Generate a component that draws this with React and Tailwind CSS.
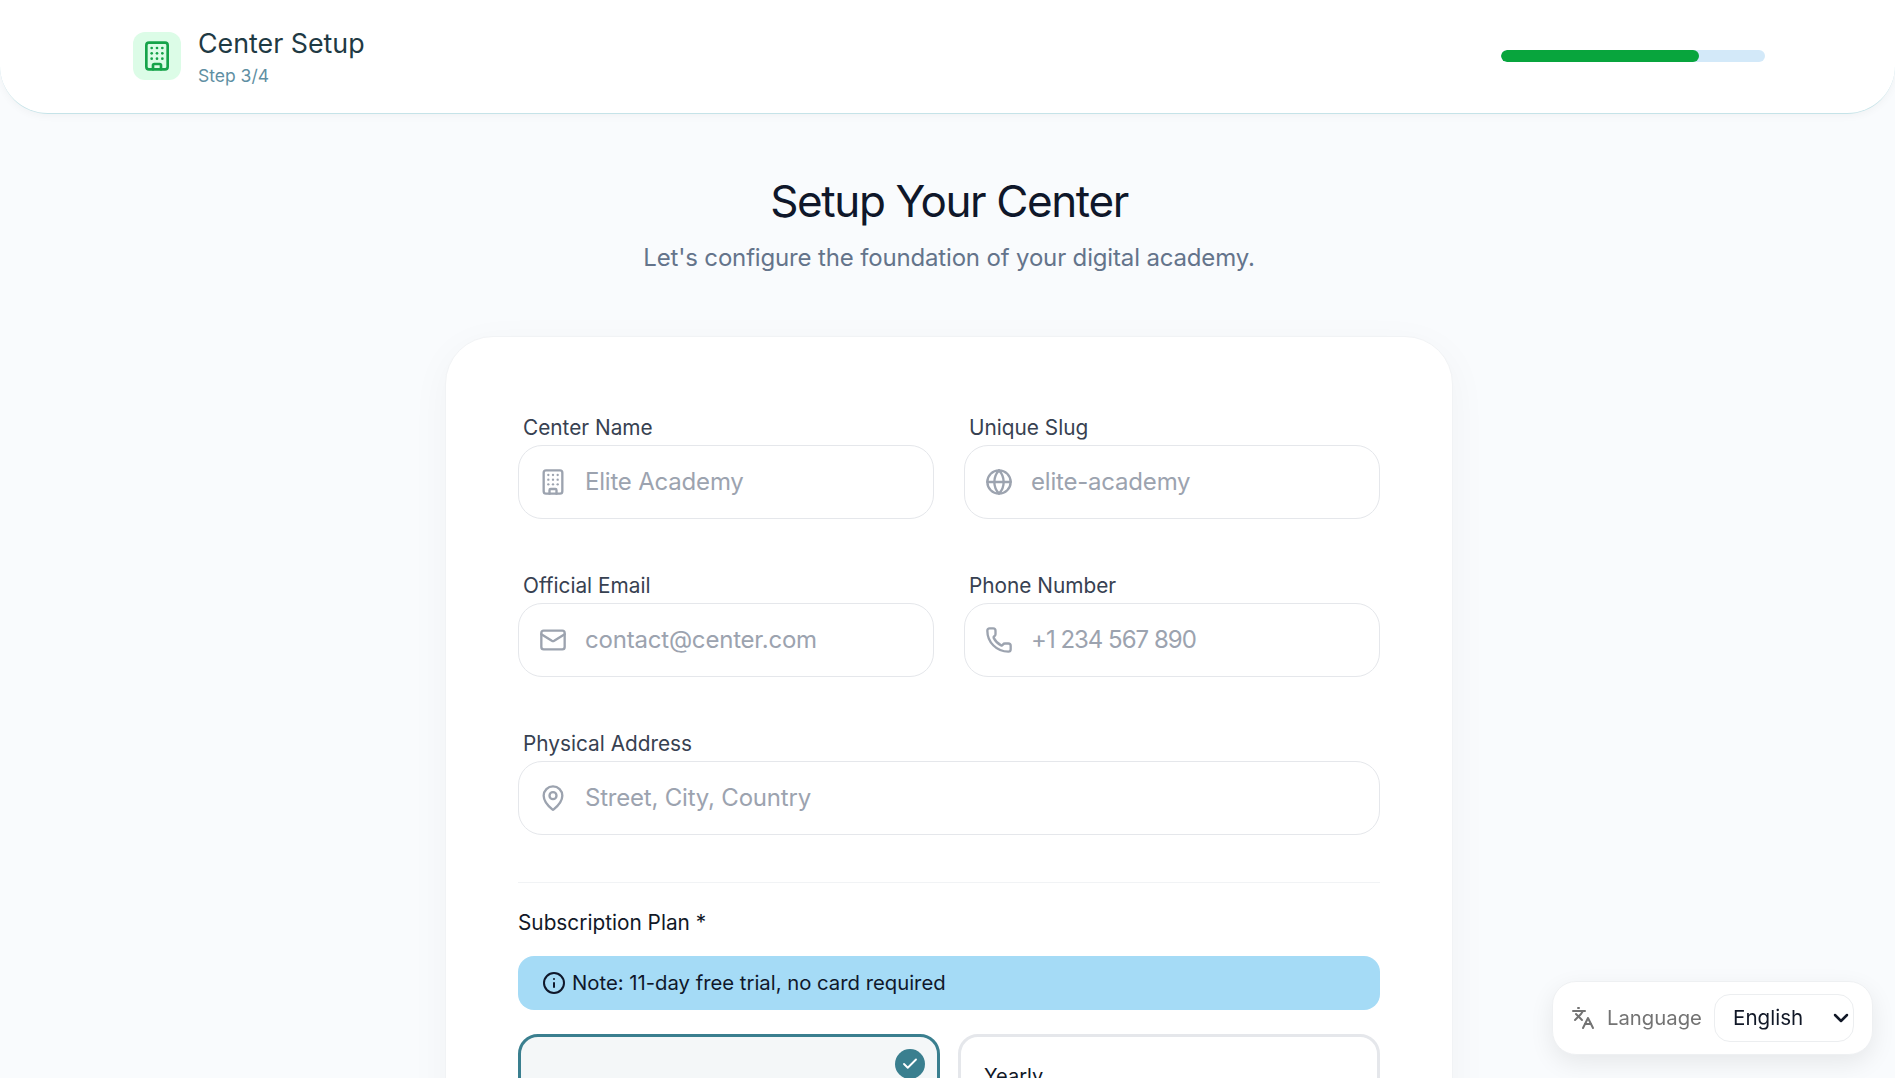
import { Building, Globe, Mail, Phone, MapPin, Info, Languages, Check, ChevronDown } from 'lucide-react'

function Field({ label, placeholder, icon: Icon, tracking = 'tracking-[-0.2px]' }) {
  return (
    <div className="flex flex-col">
      <label className="pl-[5px] text-[20.8px] leading-[28px] text-[#374151] mb-[3px]">{label}</label>
      <div className="h-[74px] flex items-center rounded-[24px] border border-[#e5e7eb] bg-white pl-[20px]">
        <span className="w-[28px] flex justify-center text-[#9ca3af]">
          <Icon size={28} strokeWidth={2} />
        </span>
        <input
          placeholder={placeholder}
          className={`ml-[18px] flex-1 min-w-0 bg-transparent outline-none text-[24px] placeholder:text-[#9ca3af] ${tracking}`}
        />
      </div>
    </div>
  )
}

export default function App() {
  return (
    <div className="relative h-screen overflow-hidden bg-[#f9fbfd] font-['Inter',sans-serif] text-[#111827]">
      <header className="h-[114px] flex items-center justify-between pl-[133px] pr-[130px] pb-[1px] bg-white rounded-b-[48px] border-b border-[#c5e3e8] shadow-[0_2px_8px_rgba(0,0,0,0.04)]">
        <div className="flex items-center gap-[17px]">
          <div className="w-[48px] h-[48px] rounded-[12px] bg-[#dcfce7] flex items-center justify-center text-[#16a34a]">
            <Building size={32} strokeWidth={2} />
          </div>
          <div className="flex flex-col">
            <span className="text-[26.8px] leading-[32px] text-[#1f3a44] mt-[3px]">Center Setup</span>
            <span className="text-[17.5px] leading-[24px] mt-[5px] text-[#5f8fa3]">Step 3/4</span>
          </div>
        </div>
        <div className="w-[264px] h-[12px] rounded-full bg-[#d3e9f9] overflow-hidden">
          <div className="w-3/4 h-full rounded-full bg-[#08a53d]" />
        </div>
      </header>

      <main className="ml-[445px] w-[1008px]">
        <div className="pt-[59px] h-[222px] text-center">
          <h1 className="text-[44px] leading-[56px] font-normal text-[#0f172a] tracking-[-1.4px]">Setup Your Center</h1>
          <p className="mt-[13px] text-[24px] leading-[32px] text-[#64748b] tracking-[-0.16px]">Let's configure the foundation of your digital academy.</p>
        </div>

        <div className="bg-white rounded-[48px] border border-[#f1f3f5] shadow-[0_10px_40px_rgba(15,23,42,0.04)] px-[72px] pt-[77px] pb-[60px]">
          <div className="grid grid-cols-2 gap-x-[30px] gap-y-[53px]">
            <Field label="Center Name" placeholder="Elite Academy" icon={Building} />
            <Field label="Unique Slug" placeholder="elite-academy" icon={Globe} />
            <Field label="Official Email" placeholder="contact@center.com" icon={Mail} />
            <Field label="Phone Number" placeholder="+1 234 567 890" icon={Phone} tracking="tracking-[-1px]" />
            <div className="col-span-2">
              <Field label="Physical Address" placeholder="Street, City, Country" icon={MapPin} />
            </div>
          </div>

          <div className="mt-[47px] border-t border-[#f1f3f5]" />

          <div className="mt-[26px] text-[20.8px] leading-[28px] font-normal text-[#111827]">Subscription Plan *</div>

          <div className="mt-[19px] h-[54px] flex items-center gap-[6px] rounded-[16px] bg-[#a5dbf6] pl-[24px] text-[20.3px] text-[#0f172a]">
            <Info size={24} strokeWidth={2} />
            <span>Note: 11-day free trial, no card required</span>
          </div>

          <div className="mt-[24px] grid grid-cols-[422px_422px] gap-x-[18px]">
            <div className="relative h-[200px] rounded-[20px] border-[3px] border-[#3a7f8f] bg-[#f4f7f8]">
              <span className="absolute right-[12px] top-[12px] w-[30px] h-[30px] rounded-full bg-[#3a7f8f] flex items-center justify-center text-white">
                <Check size={18} strokeWidth={2.5} />
              </span>
            </div>
            <div className="h-[200px] rounded-[20px] border-[3px] border-[#e5e7eb] bg-white pl-[23px] pt-[25px] text-[20px] leading-[28px] font-normal">
              Yearly
            </div>
          </div>
        </div>
      </main>

      <div className="fixed left-[1552px] top-[981px] w-[321px] h-[74px] flex items-center justify-between pl-[18px] pr-[18px] bg-white rounded-[24px] border border-[#eef0f2] shadow-[0_8px_24px_rgba(0,0,0,0.08)]">
        <div className="flex items-center gap-[12px] text-[#737373]">
          <Languages size={24} strokeWidth={2} />
          <span className="text-[20.3px]">Language</span>
        </div>
        <div className="w-[140px] h-[48px] flex items-center justify-between pl-[18px] rounded-[16px] border border-[#eceef0] text-[20.6px] text-[#111827]">
          <span>English</span>
          <ChevronDown size={24} strokeWidth={2.5} />
        </div>
      </div>
    </div>
  )
}
